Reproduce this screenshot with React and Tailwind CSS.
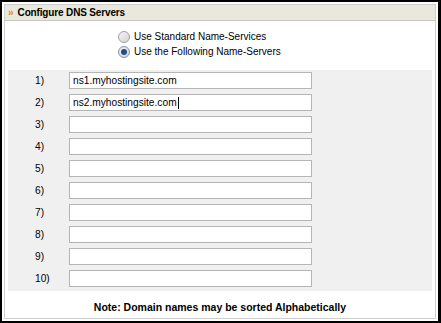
import React from 'react';

const servers = [
  'ns1.myhostingsite.com',
  'ns2.myhostingsite.com',
  '', '', '', '', '', '', '', '',
];

const App = () => {
  return (
    <div
      className="w-[441px] h-[323px] bg-black pt-[2px] pl-[2px] pr-[3px] pb-[2px]"
      style={{ fontFamily: '"Liberation Sans", Arial, sans-serif' }}
    >
      <div className="w-full h-full bg-white p-[2px]">
        <div className="w-full h-full border border-[#cfcfcf] flex flex-col">
          {/* Header */}
          <div className="h-[16px] bg-[#e8e9dc] border-b border-[#c9c9c0] flex items-center pl-[3px] shrink-0">
            <span className="text-[#d98a2b] text-[10px] font-bold leading-none mr-[4px]">»</span>
            <span className="text-[10px] font-bold text-black leading-none tracking-[-0.15px]">Configure DNS Servers</span>
          </div>

          {/* Radio options */}
          <div className="pl-[113px] pt-[9px] flex flex-col gap-[2px] text-[10px] text-black">
            <label className="flex items-center gap-[4px] h-[13px]">
              <span className="w-[12px] h-[12px] rounded-full border border-[#a0a0a0] bg-gradient-to-br from-[#f4f4f4] to-[#d4d4d4]" />
              <span>Use Standard Name-Services</span>
            </label>
            <label className="flex items-center gap-[4px] h-[13px]">
              <span className="w-[12px] h-[12px] rounded-full border border-[#7e8fa6] bg-gradient-to-br from-[#f4f4f4] to-[#d4d4d4] flex items-center justify-center">
                <span className="w-[6px] h-[6px] rounded-full bg-[#1f4f85]" />
              </span>
              <span>Use the Following Name-Servers</span>
            </label>
          </div>

          {/* Server list */}
          <div className="mx-[3px] mt-[12px] bg-[#f0f0f0] pt-[2px] pb-[4px] flex flex-col gap-[5px]">
            {servers.map((s, i) => (
              <div key={i} className="flex items-center h-[17px]">
                <span className="w-[61px] text-[10.2px] text-black pl-[27px]">{i + 1})</span>
                <div className="w-[243px] h-[17px] bg-white border border-[#b5b5b5] flex items-center pl-[3px] text-[10.2px] text-black">
                  {s}
                  {i === 1 && <span className="inline-block w-[1px] h-[12px] bg-black ml-[1px]" />}
                </div>
              </div>
            ))}
          </div>

          {/* Note */}
          <div className="flex-1 flex items-center justify-center pt-[7px]">
            <span className="text-[10.5px] font-bold text-black">Note: Domain names may be sorted Alphabetically</span>
          </div>
        </div>
      </div>
    </div>
  );
};

export default App;
